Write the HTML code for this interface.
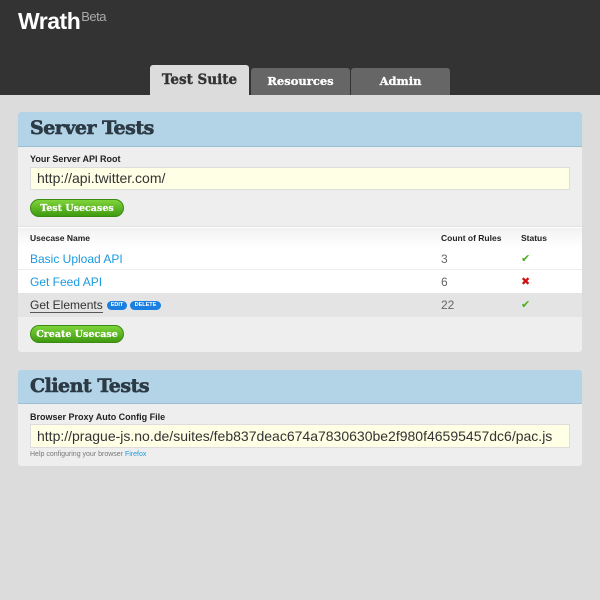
<!DOCTYPE html>
<html><head><style>
*{margin:0;padding:0;box-sizing:border-box}
body{width:600px;height:600px;background:#dcdcdc;font-family:"Liberation Sans",sans-serif;position:relative;overflow:hidden}
.a{position:absolute}
.hdr{left:0;top:0;width:600px;height:95px;background:#333}
.logo{left:18px;top:8px;color:#fff;font-size:23px;font-weight:bold;letter-spacing:-0.5px}
.logo sup{font-size:13px;font-weight:normal;color:#aaa;vertical-align:top;position:relative;top:1px;margin-left:1px}
.tab{top:68px;height:27px;width:99px;background:#666;color:#fff;font-family:"DejaVu Serif",serif;font-weight:bold;font-size:11.5px;text-align:center;line-height:27px;border-radius:3px 3px 0 0;-webkit-text-stroke:0.3px #fff}
.tab.on{top:65px;height:30px;background:#dcdcdc;color:#333;font-size:13.5px;line-height:30px;-webkit-text-stroke:0.4px #333}
.panel{left:18px;width:564px;background:#eee;border-radius:3px}
.ph{position:absolute;left:0;top:0;width:564px;background:#b3d3e6;border-bottom:1px solid #9dbfd4;border-radius:3px 3px 0 0}
.ph span{position:absolute;left:12px;font-family:"DejaVu Serif",serif;font-weight:bold;font-size:19px;color:#2b3a44;letter-spacing:-0.5px;-webkit-text-stroke:0.6px #2b3a44}
.lbl{font-size:9px;font-weight:bold;color:#222}
.inp{left:12px;width:540px;background:#ffffe6;border:1px solid #ddd;font-size:14px;color:#333;padding-left:6px;white-space:nowrap;overflow:hidden}
.btn{height:18px;border-radius:9px;background:linear-gradient(#7fd43a,#3f9a10);color:#fff;font-family:"DejaVu Serif",serif;font-weight:bold;font-size:9.5px;text-align:center;line-height:17px;border:1px solid #3c8a14;-webkit-text-stroke:0.2px #fff}
.row{left:0;width:564px;font-size:12px}
.nm{position:absolute;left:12px;color:#1a9ae0}
.ct{position:absolute;left:423px;color:#666}
.st{position:absolute;left:503px;font-size:11px}
.pill{background:#1a7fe0;color:#fff;font-size:5.5px;font-weight:bold;border-radius:5px;height:9px;line-height:9px;text-align:center}
</style></head><body>
<div class="a hdr"></div>
<div class="a logo">Wrath<sup>Beta</sup></div>
<div class="a tab on" style="left:150px">Test Suite</div>
<div class="a tab" style="left:251px">Resources</div>
<div class="a tab" style="left:351px">Admin</div>

<div class="a panel" style="top:112px;height:240px">
 <div class="ph" style="height:35px"><span style="top:5px">Server Tests</span></div>
 <div class="a lbl" style="left:12px;top:42px">Your Server API Root</div>
 <div class="a inp" style="top:55px;height:23px;line-height:21px">http://api.twitter.com/</div>
 <div class="a btn" style="left:12px;top:87px;width:94px">Test Usecases</div>
 <div class="a" style="left:0;top:114px;width:564px;height:91px;background:#fff;border-top:1px solid #e2e2e2"></div>
 <div class="a row" style="top:116px;height:20px;background:linear-gradient(#f2f2f2,#fff)"></div>
 <div class="a lbl" style="left:12px;top:121px;font-size:8.5px">Usecase Name</div>
 <div class="a lbl" style="left:423px;top:121px;font-size:8.5px">Count of Rules</div>
 <div class="a lbl" style="left:503px;top:121px;font-size:8.5px">Status</div>
 <div class="a row" style="top:136px;height:22px;border-bottom:1px solid #eee"><span class="nm" style="top:4px">Basic Upload API</span><span class="ct" style="top:4px">3</span><span class="st" style="top:4px;color:#4aae1c">✔</span></div>
 <div class="a row" style="top:158px;height:23px"><span class="nm" style="top:5px">Get Feed API</span><span class="ct" style="top:5px">6</span><span class="st" style="top:5px;color:#d01010">✖</span></div>
 <div class="a row" style="top:181px;height:24px;background:#e4e4e4"><span class="nm" style="top:5px;color:#333;border-bottom:1px solid #555">Get Elements</span><span class="pill a" style="left:89px;top:8px;width:20px">EDIT</span><span class="pill a" style="left:112px;top:8px;width:31px">DELETE</span><span class="ct" style="top:5px">22</span><span class="st" style="top:5px;color:#4aae1c">✔</span></div>
 <div class="a btn" style="left:12px;top:213px;width:94px">Create Usecase</div>
</div>

<div class="a panel" style="top:370px;height:96px">
 <div class="ph" style="height:34px"><span style="top:5px">Client Tests</span></div>
 <div class="a lbl" style="left:12px;top:42px">Browser Proxy Auto Config File</div>
 <div class="a inp" style="top:54px;height:24px;line-height:22px">http://prague-js.no.de/suites/feb837deac674a7830630be2f980f46595457dc6/pac.js</div>
 <div class="a" style="left:12px;top:81px;font-size:7px;color:#777">Help configuring your browser <span style="color:#1a9ae0">Firefox</span></div>
</div>
</body></html>
